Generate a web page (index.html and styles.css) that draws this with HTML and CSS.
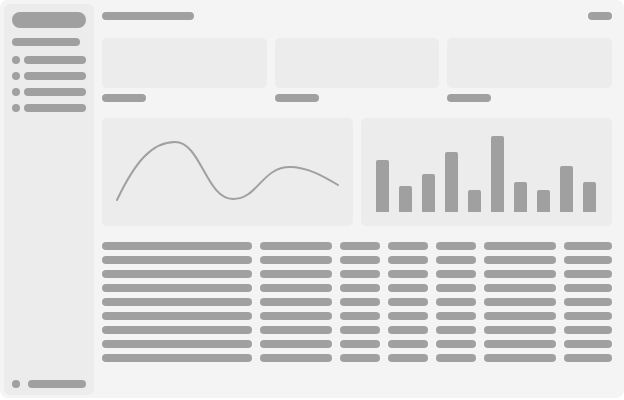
FILE: index.html
```html
<!doctype html>
<html lang="en">

<head>
    <meta charset="utf-8">
    <meta name="viewport" content="width=device-width, initial-scale=1">
    <title>Dashboard</title>
    <link rel="stylesheet" href="styles.css">
</head>

<body>
    <div class="app">
        <!-- sidebar -->
        <aside class="sidebar">
            <div class="logo"></div>
            <div class="section-title"></div>
            <ul class="nav">
                <li class="nav-item"><span class="dot"></span><span class="nav-label"></span></li>
                <li class="nav-item"><span class="dot"></span><span class="nav-label"></span></li>
                <li class="nav-item"><span class="dot"></span><span class="nav-label"></span></li>
                <li class="nav-item"><span class="dot"></span><span class="nav-label"></span></li>
            </ul>
            <div class="sidebar-footer"><span class="dot"></span><span class="footer-label"></span></div>
        </aside>

        <main class="main">
            <div class="topbar">
                <div class="page-title"></div>
                <div class="user-pill"></div>
            </div>

            <div class="stats">
                <div class="stat"><div class="stat-box"></div><div class="stat-label"></div></div>
                <div class="stat"><div class="stat-box"></div><div class="stat-label"></div></div>
                <div class="stat"><div class="stat-box"></div><div class="stat-label"></div></div>
            </div>

            <div class="charts">
                <div class="chart line-chart">
                    <svg viewBox="0 0 251 108" width="251" height="108">
                        <path d="M15 82 C33 44 50 24 73 24 C99 24 104 81 131 81 C156 81 160 49 188 49 C205 49 221 58 236 67" fill="none" stroke="#a0a0a0" stroke-width="2" stroke-linecap="round"/>
                    </svg>
                </div>
                <div class="chart bar-chart">
                    <div class="bar" style="height: 52px"></div>
                    <div class="bar" style="height: 26px"></div>
                    <div class="bar" style="height: 38px"></div>
                    <div class="bar" style="height: 60px"></div>
                    <div class="bar" style="height: 22px"></div>
                    <div class="bar" style="height: 76px"></div>
                    <div class="bar" style="height: 30px"></div>
                    <div class="bar" style="height: 22px"></div>
                    <div class="bar" style="height: 46px"></div>
                    <div class="bar" style="height: 30px"></div>
                </div>
            </div>

            <div class="table" id="table"></div>
        </main>
    </div>
    <script>
        // fill the table with placeholder rows
        const table = document.getElementById('table');
        for (let r = 0; r < 9; r++) {
            for (let c = 0; c < 7; c++) {
                const cell = document.createElement('div');
                cell.className = 'cell';
                table.appendChild(cell);
            }
        }
    </script>
</body>
</html>
```

FILE: styles.css
```css
* {
    box-sizing: border-box;
}
html, body {
    margin: 0;
    padding: 0;
    background: #ffffff;
    font-family: "Liberation Sans", Arial, sans-serif;
}
.app {
    display: flex;
    width: 624px;
    height: 398px;
    padding: 4px 12px 3px 4px;
    background: #f4f4f4;
    border-radius: 8px;
}

/* sidebar */
.sidebar {
    display: flex;
    flex-direction: column;
    width: 90px;
    padding: 8px 8px 7px 8px;
    background: #ececec;
    border-radius: 6px;
}
.logo {
    height: 16px;
    border-radius: 8px;
    background: #a0a0a0;
}
.section-title {
    width: 68px;
    height: 8px;
    margin-top: 10px;
    border-radius: 4px;
    background: #a0a0a0;
}
.nav {
    list-style: none;
    margin: 10px 0 0 0;
    padding: 0;
    display: flex;
    flex-direction: column;
    gap: 8px;
}
.nav-item {
    display: flex;
    gap: 4px;
    height: 8px;
}
.dot {
    width: 8px;
    height: 8px;
    border-radius: 50%;
    background: #a0a0a0;
    flex-shrink: 0;
}
.nav-label {
    flex: 1;
    border-radius: 4px;
    background: #a0a0a0;
}
.sidebar-footer {
    display: flex;
    gap: 8px;
    height: 8px;
    margin-top: auto;
}
.footer-label {
    flex: 1;
    border-radius: 4px;
    background: #a0a0a0;
}

/* main area */
.main {
    flex: 1;
    margin-left: 8px;
    padding-top: 8px;
    display: flex;
    flex-direction: column;
}
.topbar {
    display: flex;
    justify-content: space-between;
    height: 8px;
}
.page-title {
    width: 92px;
    border-radius: 4px;
    background: #a0a0a0;
}
.user-pill {
    width: 24px;
    border-radius: 4px;
    background: #a0a0a0;
}

.stats {
    display: grid;
    grid-template-columns: repeat(3, 1fr);
    gap: 8px;
    margin-top: 18px;
}
.stat-box {
    height: 50px;
    border-radius: 5px;
    background: #ececec;
}
.stat-label {
    width: 44px;
    height: 8px;
    margin-top: 6px;
    border-radius: 4px;
    background: #a0a0a0;
}

.charts {
    display: grid;
    grid-template-columns: 1fr 1fr;
    gap: 8px;
    margin-top: 16px;
}
.chart {
    height: 108px;
    border-radius: 5px;
    background: #ececec;
}
.line-chart svg {
    display: block;
}
.bar-chart {
    display: flex;
    align-items: flex-end;
    gap: 10px;
    padding: 0 16px 14px 15px;
}
.bar {
    width: 13px;
    border-radius: 2px 2px 0 0;
    background: #a0a0a0;
}

.table {
    display: grid;
    grid-template-columns: 150px 72px 40px 40px 40px 72px 48px;
    column-gap: 8px;
    row-gap: 6px;
    margin-top: 16px;
}
.cell {
    height: 8px;
    border-radius: 4px;
    background: #a0a0a0;
}
```
